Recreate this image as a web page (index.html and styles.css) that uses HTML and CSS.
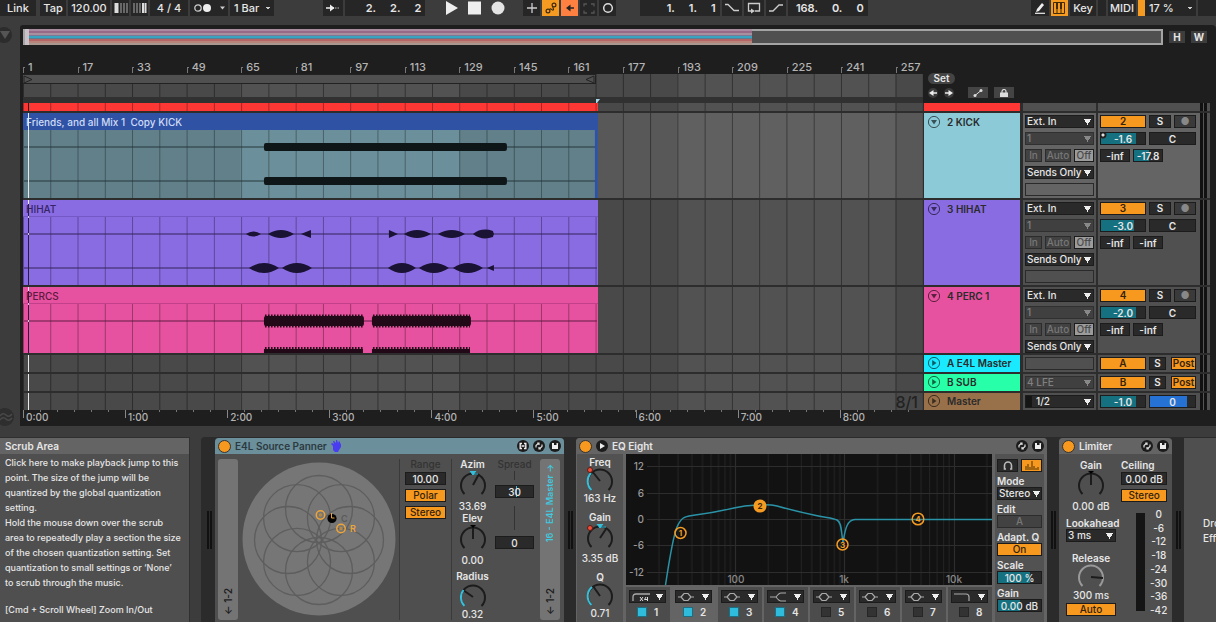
FILE: index.html
```html
<!DOCTYPE html>
<html lang="en">
<head>
<meta charset="utf-8">
<title>Arrangement</title>
<link rel="stylesheet" href="styles.css">
</head>
<body>
<svg class="defs" aria-hidden="true">
  <symbol id="refresh" viewBox="0 0 12 12"><circle cx="6" cy="6" r="6" fill="#1c1c1c"/><path d="M3 7.500V5.500L5.500 3.200M9 4.500v2L6.500 8.800M4.200 3.200h1.800v1.800M7.800 8.800H6V7" fill="none" stroke="#ddd" stroke-width="1.200"/></symbol>
  <symbol id="save" viewBox="0 0 12 12"><circle cx="6" cy="6" r="6" fill="#1c1c1c"/><path d="M3 3h5.500l.5.500V9H3z" fill="#eee"/><path d="M5 3h2.500v2H5z" fill="#1c1c1c"/></symbol>
  <symbol id="swap" viewBox="0 0 12 12"><circle cx="6" cy="6" r="6" fill="#1c1c1c"/><path d="M5 3.500H3.200v5H5M7 3.500h1.800v5H7M4.500 6h3" fill="none" stroke="#eee" stroke-width="1.400"/></symbol>
  <symbol id="fold" viewBox="0 0 14 14"><circle cx="7" cy="7" r="5.600" fill="none" stroke="currentColor"/><path d="M4 5h6L7 9.500z" fill="currentColor"/></symbol>
  <symbol id="unfold" viewBox="0 0 14 14"><circle cx="7" cy="7" r="5.600" fill="none" stroke="currentColor"/><path d="M5.200 4v6L9.500 7z" fill="currentColor"/></symbol>
  <symbol id="bell" viewBox="0 0 16 10"><path d="M0 5h3M13 5h3M3 5l3-3.500h4L13 5l-3 3.500H6z" fill="none" stroke="#aaa" stroke-width="1.200"/></symbol>
  <symbol id="arc" viewBox="0 0 28 28"><path d="M5.500 23A12 12 0 1 1 22.500 23" fill="none" stroke="currentColor" stroke-width="2"/></symbol>
  <symbol id="petal" viewBox="0 0 154 154"><circle cx="77" cy="47" r="33.500" fill="none" stroke="#5e5e5e" stroke-width="1.300"/></symbol>
</svg>

<header class="toolbar">
  <div class="group">
    <button class="tb w36">Link</button><button class="tb w26 ml">Tap</button>
    <input class="tb w42" aria-label="Tempo" value="120.00">
    <button class="tb w16" aria-label="Nudge down"><svg width="14" height="10"><path d="M1.500 0v10M3.500 0v10" stroke="#ddd" stroke-width="2"/><path d="M7 0v10M10 0v10M13 0v10" stroke="#aaa"/></svg></button>
    <button class="tb w16" aria-label="Nudge up"><svg width="14" height="10"><path d="M1 0v10M4 0v10M7 0v10" stroke="#aaa"/><path d="M10 0v10M12.500 0v10" stroke="#ddd" stroke-width="2"/></svg></button>
    <input class="tb w38" aria-label="Time signature" value="4 / 4">
    <button class="tb w38" aria-label="Metronome"><svg width="32" height="10"><circle cx="5" cy="5" r="3.200" fill="none" stroke="#ccc" stroke-width="1.300"/><circle cx="14" cy="5" r="4" fill="#eee"/><path d="M27 3.500h5L29.500 6.500z" fill="#ccc"/></svg></button>
    <select class="tb w44 drop" aria-label="Quantization"><option>1 Bar</option></select>
  </div>
  <div class="group">
    <button class="tb w20" aria-label="Follow"><svg width="14" height="8"><path d="M0 4h8" stroke="#eee" stroke-width="1.500"/><path d="M4 0.500v7L8.500 4z" fill="#eee"/><path d="M9 4h5" stroke="#bbb" stroke-dasharray="1.500 1"/></svg></button>
    <output class="tb w80 pos"><span>2.</span><span>2.</span><span>2</span></output>
    <div class="transport">
      <button aria-label="Play"><svg width="14" height="16"><path d="M1 1l12 7-12 7z" fill="#eee"/></svg></button>
      <button aria-label="Stop"><svg width="14" height="16"><path d="M0 1.500h13v13H0z" fill="#eee"/></svg></button>
      <button aria-label="Record"><svg width="14" height="16"><circle cx="7" cy="8" r="6.500" fill="#e4e4e4"/></svg></button>
    </div>
    <button class="tb w16" aria-label="Overdub"><svg width="10" height="10"><path d="M5 0v10M0 5h10" stroke="#ccc" stroke-width="1.300"/></svg></button>
    <button class="tb w16 amber" aria-label="Automation arm"><svg width="12" height="12" fill="none" stroke="#402a08" stroke-width="1.200"><circle cx="3" cy="9" r="1.900"/><circle cx="9" cy="3" r="1.900"/><path d="M4.500 7.500C6 5.500 6.500 8.500 8 8S7 5 8 4.500"/></svg></button>
    <button class="tb w16 coral" aria-label="Re-enable automation"><svg width="12" height="8"><path d="M5 4h5" stroke="#222" stroke-width="1.500"/><path d="M6.500 .5v7L2 4z" fill="#222"/></svg></button>
    <button class="tb w16" aria-label="Capture"><svg width="12" height="11"><path d="M1 3.500V1h3M8 1h3v2.500M11 7.500V10H8M4 10H1V7.500" fill="none" stroke="#555" stroke-width="1.300"/></svg></button>
    <button class="tb w16" aria-label="Session record"><svg width="12" height="12"><circle cx="6" cy="6" r="4.300" fill="none" stroke="#ddd" stroke-width="1.500"/></svg></button>
  </div>
  <div class="group">
    <output class="tb w80 pos"><span>1.</span><span>1.</span><span>1</span></output>
    <button class="tb w20" aria-label="Punch in"><svg width="14" height="10"><path d="M0 1.500h3l6 6h5" fill="none" stroke="#ccc" stroke-width="1.300"/></svg></button>
    <button class="tb w20" aria-label="Loop"><svg width="14" height="12"><path d="M8 9h4.500V1.500h-11V9H5" fill="none" stroke="#ccc" stroke-width="1.300"/><path d="M4 6.500v5L8 9z" fill="#ccc"/></svg></button>
    <button class="tb w20" aria-label="Punch out"><svg width="14" height="10"><path d="M0 8h4l6-6h4" fill="none" stroke="#ccc" stroke-width="1.300"/></svg></button>
    <output class="tb w80 pos"><span>168.</span><span>0.</span><span>0</span></output>
  </div>
  <div class="group">
    <button class="tb w18" aria-label="Draw"><svg width="12" height="12"><path d="M2 10l1-3 5-6 2 2-5 6z" fill="#eee"/><path d="M1 11.300h10" stroke="#eee" stroke-width="1.200"/></svg></button>
    <button class="tb w16 amber" aria-label="Keyboard"><svg width="12" height="12"><path d="M.5.500h11v11H.5zM4 6v6M8 6v6" fill="none" stroke="#402a08"/><path d="M4 0v7M8 0v7" stroke="#402a08" stroke-width="2"/></svg></button>
    <button class="tb w26">Key</button><span class="tb w8"></span>
    <button class="tb w28">MIDI</button>
    <select class="tb w58 drop cpu" aria-label="CPU load"><option>17 %</option></select><span class="tb w18"></span>
  </div>
</header>

<main class="arrange">
  <aside class="gutter">
    <svg width="12" height="16"><circle cx="4" cy="8" r="8" fill="#2c2c2c"/><path d="M0 4h10L5 12z" fill="#555"/></svg>
    <svg width="16" height="18"><circle cx="5" cy="9" r="9" fill="#2e2e2e"/><path d="M0 8q3-4 6-1t6-1M0 12q3-4 6-1t6-1" fill="none" stroke="#484848" stroke-width="1.500"/></svg>
  </aside>
  <section class="panel">
    <div class="overview-row">
      <div class="overview"><div class="content"></div></div>
      <button class="chip">H</button><button class="chip">W</button>
    </div>
    <div class="head-row">
      <div class="ruler-col">
        <div class="ruler"><span>1</span><span>17</span><span>33</span><span>49</span><span>65</span><span>81</span><span>97</span><span>113</span><span>129</span><span>145</span><span>161</span><span>177</span><span>193</span><span>209</span><span>225</span><span>241</span><span>257</span></div>
        <div class="scrub lines">
          <div class="loop"><svg width="10" height="9"><path d="M1 1l8 3.500L1 8z" fill="none" stroke="#222"/></svg><svg width="10" height="9"><path d="M9 1L1 4.500 9 8z" fill="none" stroke="#222"/></svg></div>
        </div>
        <div class="locator"><svg width="4" height="4"><path d="M0 0h4L1 4H0z" fill="#a8d8e8"/></svg></div>
      </div>
      <div class="set-col">
        <button class="set">Set</button>
        <div class="set-row">
          <button class="dot" aria-label="Previous"><svg width="10" height="10"><path d="M4 5h5" stroke="#eee" stroke-width="1.500"/><path d="M5.500 2v6L1 5z" fill="#eee"/></svg></button>
          <button class="dot" aria-label="Next"><svg width="10" height="10"><path d="M1 5h5" stroke="#eee" stroke-width="1.500"/><path d="M4.500 2v6L9 5z" fill="#eee"/></svg></button>
          <button class="mini first" aria-label="Automation"><svg width="10" height="8"><path d="M2 6.500l6-5" stroke="#ddd"/><circle cx="2" cy="6.500" r="1.500" fill="#ddd"/><circle cx="8" cy="1.500" r="1.500" fill="#ddd"/></svg></button>
          <button class="mini" aria-label="Lock"><svg width="8" height="8"><path d="M0 3.500h8V8H0z" fill="#ddd"/><path d="M2 4V2.500a2 2 0 0 1 4 0V4" fill="none" stroke="#ddd" stroke-width="1.200"/></svg></button>
        </div>
      </div>
    </div>

    <div class="tracks">
      <div class="track sliver">
        <div class="lane lines"><div class="clip red"><div class="body"></div></div></div>
        <div class="name red"></div><div class="io"></div><div class="mix"></div><div class="meter"></div>
      </div>

      <div class="track tall selected">
        <div class="lane lines"><div class="clip kick"><div class="title">Friends, and all Mix 1&nbsp; Copy KICK</div><div class="body">
          <svg viewBox="0 0 575 68" preserveAspectRatio="none"><path d="M1 17h573M1 51h573" stroke="#27363b"/><rect x="241" y="13" width="243" height="8" rx="2" fill="#0f1618"/><rect x="241" y="47" width="243" height="8" rx="2" fill="#0f1618"/><path d="M573.500 0v68" stroke="#2f52a5" stroke-width="3"/></svg></div></div></div>
        <div class="name cyan"><svg width="14" height="14"><use href="#fold"/></svg>2 KICK</div>
        <div class="io">
          <select aria-label="Input type"><option>Ext. In</option></select><select class="dim" aria-label="Input channel"><option>1</option></select>
          <div class="row"><button class="b dim w16">In</button><button class="b dim grow">Auto</button><button class="b lit w20">Off</button></div>
          <select aria-label="Output"><option>Sends Only</option></select><div class="slot"></div>
        </div>
        <div class="mix">
          <div class="row"><button class="b on w46">2</button><button class="b w22">S</button><button class="b w22 rec" aria-label="Arm">●</button></div>
          <div class="row"><input class="b w46 fill80 auto" aria-label="Volume" value="-1.6"><input class="b w48" aria-label="Pan" value="C"></div>
          <div class="row"><input class="b w30" aria-label="Send A" value="-inf"><input class="b w30 fill50" aria-label="Send B" value="-17.8"></div>
        </div>
        <div class="meter"></div>
      </div>

      <div class="track tall inked">
        <div class="lane lines"><div class="clip hihat"><div class="title">HIHAT</div><div class="body">
          <svg viewBox="0 0 575 68" preserveAspectRatio="none"><path d="M1 17h573M1 51h573" stroke="#33265a"/><g fill="#1a1333">
          <path d="M223 17q7-5 15 0q-8 5-15 0zM245 17q13-8 26 0q-13 8-26 0zM278 17l10-4v8zM366 13l9 4-9 4zM381 17q13-8 27 0q-14 8-27 0zM415 17q14-8 27 0q-13 8-27 0zM450 17q9-7 20-3l1 3-1 3q-11 4-20-3z"/>
          <path d="M226 51q15-10 30 0q-15 10-30 0zM259 51q15-10 30 0q-15 10-30 0zM365 51q14-10 28 0q-14 10-28 0zM396 51q15-10 30 0q-15 10-30 0zM430 51q15-10 30 0q-15 10-30 0zM464 51l7-3v6z"/></g></svg></div></div></div>
        <div class="name violet"><svg width="14" height="14"><use href="#fold"/></svg>3 HIHAT</div>
        <div class="io">
          <select aria-label="Input type"><option>Ext. In</option></select><select class="dim" aria-label="Input channel"><option>1</option></select>
          <div class="row"><button class="b dim w16">In</button><button class="b dim grow">Auto</button><button class="b lit w20">Off</button></div>
          <select aria-label="Output"><option>Sends Only</option></select><div class="slot"></div>
        </div>
        <div class="mix">
          <div class="row"><button class="b on w46">3</button><button class="b w22">S</button><button class="b w22 rec" aria-label="Arm">●</button></div>
          <div class="row"><input class="b w46 fill75" aria-label="Volume" value="-3.0"><input class="b w48" aria-label="Pan" value="C"></div>
          <div class="row"><input class="b w30" aria-label="Send A" value="-inf"><input class="b w30" aria-label="Send B" value="-inf"></div>
        </div>
        <div class="meter"></div>
      </div>

      <div class="track mid inked">
        <div class="lane lines"><div class="clip percs"><div class="title">PERCS</div><div class="body">
          <svg viewBox="0 0 575 49" preserveAspectRatio="none"><path d="M1 17h573" stroke="#5e1c42"/><g fill="#230a18"><rect x="241" y="12" width="100" height="10" rx="2"/><rect x="349" y="12" width="99" height="10" rx="2"/><rect x="241" y="45" width="99" height="5"/><rect x="349" y="45" width="98" height="5"/></g><g stroke="#230a18" stroke-width="1.600" stroke-dasharray="1.600 1.400"><path d="M242 17h98M350 17h97" stroke-width="13"/><path d="M242 47h98M350 47h97" stroke-width="8"/></g></svg></div></div></div>
        <div class="name pink"><svg width="14" height="14"><use href="#fold"/></svg>4 PERC 1</div>
        <div class="io">
          <select aria-label="Input type"><option>Ext. In</option></select><select class="dim" aria-label="Input channel"><option>1</option></select>
          <div class="row"><button class="b dim w16">In</button><button class="b dim grow">Auto</button><button class="b lit w20">Off</button></div>
          <select aria-label="Output"><option>Sends Only</option></select>
        </div>
        <div class="mix">
          <div class="row"><button class="b on w46">4</button><button class="b w22">S</button><button class="b w22 rec" aria-label="Arm">●</button></div>
          <div class="row"><input class="b w46 fill80" aria-label="Volume" value="-2.0"><input class="b w48" aria-label="Pan" value="C"></div>
          <div class="row"><input class="b w30" aria-label="Send A" value="-inf"><input class="b w30" aria-label="Send B" value="-inf"></div>
        </div>
        <div class="meter"></div>
      </div>

      <div class="track low"><div class="lane lines"></div>
        <div class="name aqua"><svg width="14" height="14"><use href="#unfold"/></svg>A E4L Master</div>
        <div class="io"><div class="slot"></div></div>
        <div class="mix"><div class="row"><button class="b on w46">A</button><button class="b w16">S</button><button class="b on post">Post</button></div></div><div class="meter"></div></div>
      <div class="track low"><div class="lane lines"></div>
        <div class="name mint"><svg width="14" height="14"><use href="#unfold"/></svg>B SUB</div>
        <div class="io"><select class="dim" aria-label="Output"><option>4 LFE</option></select></div>
        <div class="mix"><div class="row"><button class="b on w46">B</button><button class="b w16">S</button><button class="b on post">Post</button></div></div><div class="meter"></div></div>
      <div class="track low"><div class="lane lines"><span class="zoom">8/1</span></div>
        <div class="name brown"><svg width="14" height="14"><use href="#unfold"/></svg>Master</div>
        <div class="io"><select class="out" aria-label="Master output"><option>1/2</option></select></div>
        <div class="mix"><div class="row"><input class="b w46 fill80" aria-label="Volume" value="-1.0"><input class="b w48 blue" aria-label="Pan" value="0"></div></div><div class="meter"></div></div>
    </div>
    <div class="time"><span>0:00</span><span>1:00</span><span>2:00</span><span>3:00</span><span>4:00</span><span>5:00</span><span>6:00</span><span>7:00</span><span>8:00</span></div>
  </section>
</main>

<section class="bottom">
  <article class="info">
    <h2>Scrub Area</h2>
    <p>Click here to make playback jump to this<br>point. The size of the jump will be<br>quantized by the global quantization<br>setting.<br>Hold the mouse down over the scrub<br>area to repeatedly play a section the size<br>of the chosen quantization setting. Set<br>quantization to small settings or ‘None’<br>to scrub through the music.</p>
    <p>[Cmd + Scroll Wheel] Zoom In/Out</p>
  </article>
  <div class="rack">
    <div class="link"></div>
    <section class="device panner">
      <h3 class="bar"><i class="power"></i>E4L Source Panner <svg width="10" height="12"><path d="M2 6L0 4l1-1 2 1-1-3h1l2 2V0h1l1 3 1-2 1 1v2l1-1v4L8 10l-1 2H4L2 10z" fill="#4a3cf0"/></svg><span class="icons"><svg><use href="#swap"/></svg><svg><use href="#refresh"/></svg><svg><use href="#save"/></svg></span></h3>
      <div class="inner">
        <div class="strip"><span class="io-text">← 1-2</span></div>
        <svg class="field" viewBox="0 0 154 154" width="154" height="154">
          <circle cx="77" cy="77" r="76.500" fill="#767676"/>
          <g><use href="#petal"/><use href="#petal" transform="rotate(45 77 78)"/><use href="#petal" transform="rotate(90 77 78)"/><use href="#petal" transform="rotate(135 77 78)"/><use href="#petal" transform="rotate(180 77 78)"/><use href="#petal" transform="rotate(225 77 78)"/><use href="#petal" transform="rotate(270 77 78)"/><use href="#petal" transform="rotate(315 77 78)"/></g>
          <g fill="none" stroke="#eda53a" stroke-width="1.500"><circle cx="78.500" cy="53" r="4.200"/><circle cx="99" cy="66.500" r="4.200"/><circle cx="78.500" cy="53" r="1" stroke="#b98a45"/><circle cx="99" cy="66.500" r="1" stroke="#b98a45"/></g>
          <circle cx="90" cy="56.500" r="4.600" fill="#050505"/><path d="M89.500 51v5h3" fill="none" stroke="#eda53a"/>
          <text x="99" y="60" fill="#5a5a5a">C</text><text x="108" y="70" fill="#eda53a">R</text>
        </svg>
        <div class="col range">
          <label for="range" class="off">Range</label><input id="range" class="b" value="10.00">
          <button class="b on">Polar</button><button class="b on">Stereo</button>
        </div>
        <div class="col knobs">
          <label>Azim</label><svg class="knob"><use href="#arc"/><path d="M14 14l6-11" class="ptr"/><path d="M11 0h6l-3 4zM14 3h5" class="cy"/></svg><output>33.69</output>
          <label>Elev</label><svg class="knob"><use href="#arc"/><path d="M14 14V2" class="ptr"/><path d="M11 0h6l-3 3z"/></svg><output>0.00</output>
          <label class="gap">Radius</label><svg class="knob"><use href="#arc"/><path d="M14 14L4 7" class="ptr"/><path d="M5.500 23A12 12 0 0 1 4.500 7" class="cyarc"/></svg><output>0.32</output>
        </div>
        <div class="col spread">
          <label for="spread" class="off">Spread</label><i class="stem"></i><input id="spread" class="b caret" value="30"><i class="stem long"></i><input class="b" aria-label="Elevation spread" value="0">
        </div>
        <div class="strip"><span class="route">16 - E4L Master →</span><span class="io-text">← 1-2</span></div>
      </div>
    </section>
    <div class="link"></div>
    <section class="device eq">
      <h3 class="bar"><i class="power"></i><svg width="12" height="12"><circle cx="6" cy="6" r="6" fill="#1c1c1c"/><path d="M4 3v6l5-3z" fill="#eee"/></svg>EQ Eight<span class="icons"><svg><use href="#refresh"/></svg><svg><use href="#save"/></svg></span></h3>
      <div class="inner">
        <div class="col params">
          <label>Freq</label><svg class="knob"><use href="#arc"/><path d="M14 14L6 4" class="ptr"/><path d="M5.500 23A12 12 0 0 1 5 6" class="cyarc"/><circle cx="4" cy="3" r="2.500" class="mod"/></svg><output>163 Hz</output>
          <label class="gap">Gain</label><svg class="knob roomy"><use href="#arc"/><path d="M14 14l6-9" class="ptr"/><path d="M11 0h6l-3 4zM14 3h6" class="cy"/><circle cx="4" cy="4" r="2.500" class="mod"/></svg><output>3.35 dB</output>
          <label class="gap">Q</label><svg class="knob"><use href="#arc"/><path d="M14 14L7 4" class="ptr"/><path d="M5.500 23A12 12 0 0 1 6 5" class="cyarc"/></svg><output>0.71</output>
        </div>
        <div class="center">
          <svg class="graph" viewBox="0 0 366 131">
            <defs><pattern id="dec" width="109.300" height="131" patternUnits="userSpaceOnUse"><path d="M33 0v131M52 0v131M66 0v131M76.500 0v131M85 0v131M92.500 0v131M99 0v131M104.500 0v131" stroke="#232323"/></pattern></defs>
            <rect width="366" height="131" fill="#121212"/><rect width="366" height="131" fill="url(#dec)"/>
            <path d="M109.500 0v131M218.500 0v131M328.500 0v131M21 12.500h345M21 39.500h345M21 65.500h345M21 91.500h345M21 118.500h345" stroke="#2d2d2d" stroke-width="1.200"/>
            <g fill="#999" text-anchor="end"><text x="18" y="16">12</text><text x="18" y="43">6</text><text x="18" y="69">0</text><text x="18" y="95">-6</text><text x="18" y="122">-12</text></g>
            <g fill="#888" text-anchor="middle"><text x="110" y="129">100</text><text x="218" y="129">1k</text><text x="328" y="129">10k</text></g>
            <path d="M39.500 131C43 108 47 82 51 73S58 62.500 66 61.500S95 57 108 54S142 49.500 151 52S178 59 190 61.500S206 63.500 211 66S215 78 217 88C219 78 220 66 229 65.500H366" fill="none" stroke="#2b93a8" stroke-width="1.500"/>
            <g fill="none" stroke="#f59b22" stroke-width="1.500"><circle cx="54.500" cy="79" r="5.500"/><circle cx="134" cy="52" r="5.800" fill="#f59b22"/><circle cx="216.500" cy="90.500" r="5.500"/><circle cx="292" cy="65" r="5.800"/></g>
            <g class="num" text-anchor="middle" fill="#f59b22"><text x="54.500" y="82">1</text><text x="134" y="55" fill="#3a2600">2</text><text x="216.500" y="93.500">3</text><text x="292" y="68">4</text></g>
          </svg>
          <div class="bands">
            <div class="band"><button aria-label="Filter 1 type"><svg width="18" height="10"><path d="M1 9V5q0-3 3-3h14" fill="none" stroke="#aaa" stroke-width="1.300"/><path d="M8 5l3 4M11 5L8 9M14 5l-1.500 2.500H16M15.500 5v4" fill="none" stroke="#ddd"/></svg></button><label><input type="checkbox" checked>1</label></div>
            <div class="band cur"><button aria-label="Filter 2 type"><svg width="16" height="10"><use href="#bell"/></svg></button><label><input type="checkbox" checked>2</label></div>
            <div class="band"><button aria-label="Filter 3 type"><svg width="16" height="10"><use href="#bell"/></svg></button><label><input type="checkbox" checked>3</label></div>
            <div class="band"><button aria-label="Filter 4 type"><svg width="16" height="10"><path d="M0 5h6q3-4 5-4h5M6 5q3 4 5 4h5" fill="none" stroke="#aaa" stroke-width="1.200"/></svg></button><label><input type="checkbox" checked>4</label></div>
            <div class="band"><button aria-label="Filter 5 type"><svg width="16" height="10"><use href="#bell"/></svg></button><label><input type="checkbox">5</label></div>
            <div class="band"><button aria-label="Filter 6 type"><svg width="16" height="10"><use href="#bell"/></svg></button><label><input type="checkbox">6</label></div>
            <div class="band"><button aria-label="Filter 7 type"><svg width="16" height="10"><use href="#bell"/></svg></button><label><input type="checkbox">7</label></div>
            <div class="band"><button aria-label="Filter 8 type"><svg width="16" height="10"><path d="M0 2h12q3 0 3 3v4" fill="none" stroke="#aaa" stroke-width="1.200"/></svg></button><label><input type="checkbox">8</label></div>
          </div>
        </div>
        <div class="col global">
          <div class="row"><button class="b w20" aria-label="Audition"><svg width="10" height="9"><path d="M3 8H1.500V4.500a3.500 3.500 0 0 1 7 0V8H7" fill="none" stroke="#bbb" stroke-width="1.600"/></svg></button><button class="b on w20" aria-label="Analyze"><svg width="14" height="9"><path d="M1 9V5M3 9V3M5 9V6M7 9V0M9 9V5M11 9V7M13 9V6" stroke="#6b4208" stroke-width="1.200"/></svg></button></div>
          <label for="mode">Mode</label><select id="mode"><option>Stereo</option></select>
          <label>Edit</label><button class="b dim">A</button>
          <label>Adapt. Q</label><button class="b on">On</button>
          <label for="scale">Scale</label><input id="scale" class="b fill75" value="100 %">
          <label for="gain">Gain</label><input id="gain" class="b fill50" value="0.00 dB">
        </div>
      </div>
    </section>
    <div class="link"></div>
    <section class="device limiter">
      <h3 class="bar"><i class="power"></i>Limiter<span class="icons"><svg><use href="#refresh"/></svg><svg><use href="#save"/></svg></span></h3>
      <div class="inner">
        <div class="col left">
          <label>Gain</label><svg class="knob roomy"><use href="#arc"/><path d="M14 14V2" class="ptr"/><path d="M11 0h6l-3 3z"/></svg><output>0.00 dB</output>
          <label for="look" class="look">Lookahead</label><select id="look"><option>3 ms</option></select>
          <label class="rel">Release</label><svg class="knob gray"><use href="#arc"/><path d="M14 14l12 1" class="ptr"/></svg><output>300 ms</output>
          <button class="b on">Auto</button>
        </div>
        <div class="col right">
          <label for="ceil">Ceiling</label><input id="ceil" class="b" value="0.00 dB"><button class="b on">Stereo</button>
          <div class="scale"><i class="gr"></i><ol><li>0</li><li>-6</li><li>-12</li><li>-18</li><li>-24</li><li>-30</li><li>-36</li><li>-42</li></ol></div>
        </div>
      </div>
    </section>
    <div class="link"></div>
    <div class="dropzone"><p>Drop Audio</p><p>Effects Here</p></div>
  </div>
</section>
</body>
</html>
```
FILE: styles.css
```css
* { box-sizing: border-box; }
body { margin: 0; height: 100vh; overflow: hidden; display: flex; flex-direction: column; background: #3c3c3c; color: #e6e6e6; font: 500 10px/12px Inter, "Liberation Sans", sans-serif; }
button, input, select, output { font: inherit; color: inherit; margin: 0; padding: 0; border: 0; border-radius: 0; appearance: none; }
input { text-align: center; min-width: 0; }
h2, h3, p, ol { margin: 0; padding: 0; font: inherit; list-style: none; }
svg { display: block; flex: none; }
.defs { position: absolute; width: 0; height: 0; }

.w8 { width: 8px; } .w16 { width: 17px; } .w18 { width: 18px; } .w20 { width: 20px; } .w22 { width: 22px; }
.w26 { width: 26px; } .w28 { width: 28px; } .w30 { width: 30px; } .w36 { width: 36px; } .w38 { width: 38px; }
.w42 { width: 42px; } .w44 { width: 44px; } .w46 { width: 46px; } .w48 { width: 47px; } .w58 { width: 58px; } .w80 { width: 80px; }
.grow { flex: 1; }

/* Toolbar */
.toolbar { display: flex; justify-content: space-between; height: 25px; align-items: flex-start; }
.group { display: flex; gap: 2px; flex: none; }
.group:nth-child(1) { margin-right: 26px; }
.group:nth-child(4) { margin-left: 140px; }
.tb { height: 16px; background: #262626; display: flex; align-items: center; justify-content: center; flex: none; font-size: 11px; line-height: 16px; }
.tb.ml { margin-left: 2px; }
.tb.amber { background: #f59b22; }
.tb.coral { background: #ff8142; }
.pos { font-weight: 600; justify-content: flex-end; gap: 14px; padding-right: 4px; }
.drop { padding-left: 4px; background-image: conic-gradient(from -35deg at 50% 100%, #ccc 70deg, transparent 0); background-size: 6px 3px; background-repeat: no-repeat; background-position: calc(100% - 3px) 7px; }
.cpu { border-left: 7px solid #f59b22; }
.transport { display: flex; gap: 9px; margin: 0 16px 0 18px; }
.transport button { background: none; height: 16px; }

/* Arrangement */
.arrange { display: flex; flex: none; }
.gutter { width: 20px; flex: none; display: flex; flex-direction: column; justify-content: space-between; padding-top: 2px; }
.panel { flex: 1; min-width: 0; background: #1e1e1e; border-radius: 3px 4px 0 0; padding: 4px 6px 0 3px; }
.overview-row { display: flex; align-items: center; gap: 6px; padding-right: 3px; }
.overview { flex: 1; height: 16px; background: #505050; border: 2px solid #a4a4a4; }
.overview .content { width: 64%; height: 16px; margin-top: -2px; border-left: 4px solid #c9c0c8; background: linear-gradient(#a98a9f 0 2px, #996a88 2px 4px, #a9909f 4px 6px, #7a7a98 6px 7px, #3aa3bf 7px 9px, #5a7f90 9px 10px, #b56565 10px 12px, #b8857a 12px 14px, #a99890 14px); }
.chip { width: 16px; height: 12px; background: #3d3d3d; font-weight: 700; }
.head-row { display: flex; }
.ruler-col { flex: 1; min-width: 0; }
.ruler { height: 29px; padding-top: 15px; display: grid; grid-template-columns: repeat(16, 2fr) 1fr; color: #b4b4b4; font-size: 11px; line-height: 14px; }
.ruler span { padding-left: 5px; min-width: 0; background: linear-gradient(#777, #777) 0 7px / 1px 6px no-repeat, linear-gradient(#777, #777) 0 7px / 2px 1px no-repeat; }
.lines { background-color: #494949; background-image: linear-gradient(to right, #0006 1px, transparent 1px), linear-gradient(to right, transparent 50%, #ffffff0c 50%); background-size: calc(100% / 33) 100%, calc(1600% / 33) 100%; }
.scrub { height: 23px; }
.loop { width: calc(100% * 21 / 33); height: 10px; background: #505050; border: solid #222; border-width: 1px 1px 1px 0; display: flex; justify-content: space-between; }
.locator { height: 6px; background: #313131; padding: 2px 0 0 calc(100% * 21 / 33); }
.set-col { width: 287px; flex: none; padding: 28px 0 0 5px; }
.set { width: 27px; height: 11px; border-radius: 6px; background: #444; line-height: 11px; display: block; font-weight: 600; }
.set-row { display: flex; gap: 6px; margin-top: 3px; align-items: center; }
.dot { width: 10px; height: 10px; border-radius: 5px; background: #3a3a3a; }
.mini { width: 20px; height: 11px; background: #444; display: grid; place-items: center; }
.mini.first { margin-left: 8px; }

.tracks { background: #2d2d2d; }
.track { display: flex; margin-bottom: 2px; }
.sliver { height: 8px; }
.tall { height: 85px; }
.mid { height: 66px; }
.low { height: 17px; }
.track > * { overflow: hidden; }
.lane { flex: 1; min-width: 0; position: relative; }
.lane::after { content: ""; position: absolute; top: 0; bottom: 0; left: 5px; width: 1px; background: #e8e8e8; }
.sliver .lane::after { background: #222; }
.inked .lane::after { background: linear-gradient(#e8e8e8 4px, #2a1c40 4px 16px, #cfc8e0 16px 18px, #2a1c40 18px 33px, #cfc8e0 33px 35px, #2a1c40 35px); }
.selected .lane { background-color: #585858; }
.name { width: 96px; margin-left: 1px; padding: 2px 0 0 3px; display: flex; gap: 6px; font-weight: 600; flex: none; line-height: 14px; color: #2b2b2b; }
.name svg { color: #0009; }
.low .name { padding-top: 1px; }
.io { width: 73px; margin-left: 3px; padding: 2px 2px; display: flex; flex-direction: column; gap: 4px; background: #505050; flex: none; }
.mix { width: 102px; margin-left: 2px; padding: 2px; display: flex; flex-direction: column; gap: 4px; background: #505050; flex: none; }
.meter { width: 10px; flex: none; background: linear-gradient(to right, #111 3px, #555 3px 4px, #111 4px 7px, #505050 7px); }
.selected .io, .selected .mix { background: #646464; }
.red { background: #fd3734; } .cyan { background: #8ccad7; } .violet { background: #896be2; } .pink { background: #e6529f; }
.aqua { background: #1aeaff; } .mint { background: #28ffa9; } .brown { background: #98704a; }
.row { display: flex; gap: 3px; }
.b, .io select, .global select, .left select, .slot { height: 13px; background-color: #2a2a2a; border: 1px solid #1c1c1c; line-height: 11px; text-align: center; }
.b { padding: 0; display: block; white-space: nowrap; }
.b svg { margin: auto; }
.b.on { background: #f7981f; color: #33230a; }
.b.dim { background: #424242; color: #777; border-color: #2c2c2c; }
.b.lit { background: #9c9c9c; color: #4a4a4a; }
.b.rec { color: #888; background: #3a3a3a; }
.b.blue { background: linear-gradient(to right, #2672d4 83%, #2a2a2a 0); }
.b.post { width: 25px; margin-left: 2px; }
.mix .b { font-weight: 600; }
.fill80 { background: linear-gradient(to right, #157180 80%, #2a2a2a 0); }
.fill75 { background: linear-gradient(to right, #157180 75%, #2a2a2a 0); }
.fill50 { background: linear-gradient(to right, #157180 52%, #2a2a2a 0); }
.auto { background: radial-gradient(circle at 2px 2px, #ddd 1px, #222 2px 3px, transparent 4px), linear-gradient(to right, #157180 80%, #2a2a2a 0); }
.io select, .global select, .left select { padding: 0 0 0 1px; width: 100%; text-align: left; background-image: conic-gradient(from -30deg at 50% 100%, #eee 60deg, transparent 0); background-size: 7px 6px; background-repeat: no-repeat; background-position: calc(100% - 2px) 3px; }
.io select.dim { color: #808080; background-color: #404040; background-image: conic-gradient(from -30deg at 50% 100%, #888 60deg, transparent 0); border-color: #303030; }
.io select.out { padding-left: 10px; box-shadow: inset 7px 0 0 -1px #151515; }
.slot { width: 100%; background: none; border-color: #2a2a2a; }

.clip { width: calc(100% * 21.08 / 33); height: 100%; display: flex; flex-direction: column; }
.clip .title { height: 17px; padding-left: 3px; line-height: 18px; flex: none; }
.clip .body { flex: 1; min-height: 0; background-image: linear-gradient(to right, #0005 1px, transparent 1px), linear-gradient(to right, transparent 50%, var(--alt, transparent) 50%); background-size: calc(100% / 21.08) 100%, calc(1600% / 21.08) 100%; }
.clip svg { width: 100%; height: 100%; }
.clip.kick { background: #61808a; --alt: #6b8f9b; }
.kick .title { background: #2f52a5; color: #cfdcf5; }
.clip.hihat { background: #896be2; }
.hihat .title { color: #352566; border-bottom: 1px solid #7458c6; }
.clip.percs { background: #e6529f; }
.percs .title { color: #5c1a40; border-bottom: 1px solid #c2408a; }
.zoom { position: absolute; right: 5px; bottom: 0; font-size: 16px; line-height: 16px; color: #222; }
.low:last-child { margin-bottom: 0; }
.time { height: 16px; margin-right: 287px; display: grid; grid-template-columns: repeat(8, 1021fr) 832fr; font-size: 10px; line-height: 14px; color: #b4b4b4; }
.time span { padding-left: 3px; min-width: 0; background: linear-gradient(#888, #888) 0 0 / 1px 8px no-repeat, linear-gradient(to right, #777 1px, transparent 1px) 0 0 / 17px 2px repeat-x; }

/* Bottom */
.bottom { flex: 1; min-height: 0; display: flex; padding-top: 11px; }
.info { width: 190px; flex: none; margin-right: 11px; background: #4f4f4f; border: solid #303030; border-width: 1px 1px 0 0; }
.info h2 { height: 16px; padding-left: 5px; background: #646464; line-height: 16px; font-weight: 600; }
.info p { padding: 1px 0 0 5px; font-size: 9px; line-height: 15px; white-space: nowrap; }
.info p + p { padding-top: 12px; }
.rack { flex: 1; min-width: 0; display: flex; background: #2b2b2b; border-radius: 4px 0 0 0; padding: 1px 0 0 2px; overflow: hidden; }
.link { width: 12px; flex: none; background: linear-gradient(to right, #111 2px, #2b2b2b 2px 3px, #111 3px) 50% 73px / 5px 38px no-repeat; }
.device { flex: none; background: #4f4f4f; border-radius: 4px 4px 0 0; overflow: hidden; display: flex; flex-direction: column; }
.panner { width: 349px; } .eq { width: 471px; background: #646464; } .limiter { width: 113px; }
.bar { height: 16px; flex: none; padding: 0 3px; display: flex; align-items: center; gap: 4px; background: #646464; font-weight: 600; }
.panner .bar { background: #6b8f9b; color: #2b3a40; }
.power { width: 13px; height: 13px; border-radius: 7px; background: #f7981f; border: 1px solid #333; }
.icons { margin-left: auto; display: flex; gap: 4px; }
.icons svg { width: 12px; height: 12px; }
.inner { flex: 1; min-height: 0; display: flex; padding: 5px 3px 2px; }
.strip { width: 20px; flex: none; background: #747474; border-radius: 3px; display: flex; flex-direction: column; align-items: center; padding: 5px 0; font-weight: 600; }
.strip span { writing-mode: vertical-rl; transform: rotate(180deg); white-space: nowrap; }
.route { color: #42c8df; font-size: 9px; }
.io-text { margin-top: auto; color: #1e1e1e; }
.field { margin: 3px 3px 0 4px; }
.field text { font-size: 9px; font-weight: 600; }
.col { display: flex; flex-direction: column; align-items: center; flex: none; }
.col .b { width: 100%; }
.col label { line-height: 11px; font-weight: 600; }
.col .off { color: #333; font-weight: 500; }
.range { width: 53px; padding: 0 5px; border: solid #3a3a3a; border-width: 0 1px; gap: 4px; }
.range .off { margin-bottom: -2px; }
.knobs { width: 41px; }
.knob { width: 28px; height: 28px; color: #1c1c1c; }
.knob .ptr { stroke: #1c1c1c; stroke-width: 2; }
.knob .cy { fill: #38c0da; stroke: #38c0da; }
.knob .cyarc { fill: none; stroke: #38c0da; stroke-width: 2; }
.knob .mod { fill: #f0503a; stroke: #5a1c14; }
.knob.gray { color: #9a9a9a; }
.knobs .knob { margin: 1px 0; }
.knobs .gap + .knob { margin-bottom: -3px; }
.knobs output, .params output, .left output { line-height: 13px; }
.knobs .gap { margin-top: 4px; }
.spread { width: 43px; padding: 0 2px; margin-right: 4px; }
.stem { width: 1px; height: 9px; margin: 1px 0 5px; background: #333; }
.stem.long { height: 24px; margin: 8px 0 6px; }
.caret { background: linear-gradient(to right, transparent 53%, #38c0da 53% 57%, transparent 57%) #2a2a2a; }

.eq .inner { padding: 0 3px 0 1px; gap: 3px; }
.params { width: 46px; background: #525252; padding-top: 3px; }
.params .knob { margin: -1px 0 -3px; }
.params .knob.roomy { margin: 1px 0 0; }
.params .gap { margin-top: 7px; }
.center { flex: 1; min-width: 0; display: flex; flex-direction: column; }
.graph { width: 100%; height: auto; font-size: 10px; }
.num { font-size: 8px; font-weight: 700; }
.bands { flex: 1; display: grid; grid-template-columns: repeat(8, 1fr); gap: 2px; padding-top: 2px; }
.band { background: #4c4c4c; padding: 3px 3px; }
.band.cur { background: #646464; }
.band button { width: 37px; height: 13px; padding: 0 2px; border: 1px solid #1c1c1c; display: flex; align-items: center; background: conic-gradient(from -30deg at 50% 100%, #eee 60deg, transparent 0) calc(100% - 2px) 3px / 7px 6px no-repeat #2a2a2a; }
.band label { display: flex; align-items: center; gap: 7px; padding: 3px 0 0 8px; font-weight: 600; }
.band input { width: 10px; height: 10px; background: #333; border: 1px solid #262626; }
.band input:checked { background: #2fbcdc; border-color: #1b6f82; }
.global { width: 49px; background: #525252; padding: 5px 2px 0; align-items: stretch; }
.global .row { justify-content: space-between; }
.global .row .b { width: 21px; }
.global label { line-height: 12px; margin-top: 3px; }
.global select { background-position: calc(100% - 1px) 3px; }

.limiter .inner { padding: 6px 5px 0 7px; gap: 5px; }
.left { width: 50px; align-items: stretch; text-align: center; flex: none; }
.left .knob { align-self: center; }
.left .knob.roomy { margin-bottom: 1px; }
.left .knob.gray { margin: -1px 0 -2px; }
.left .look { margin-top: 5px; }
.left .rel { margin-top: 11px; }
.left .look, .left .rel { white-space: nowrap; }
.left output + .b { margin-top: 1px; }
.right { flex: 1; align-items: stretch; gap: 4px; }
.right label { margin-bottom: -3px; }
.scale { display: flex; gap: 5px; padding: 2px 0 0 15px; }
.gr { width: 9px; height: 98px; margin-top: 5px; background: #151515; flex: none; }
.scale ol { flex: 1; display: flex; flex-direction: column; justify-content: space-between; height: 108px; text-align: center; }
.dropzone { flex: 1; min-width: 0; background: #4f4f4f; padding: 78px 0 0 19px; white-space: nowrap; line-height: 15px; overflow: hidden; }
```
